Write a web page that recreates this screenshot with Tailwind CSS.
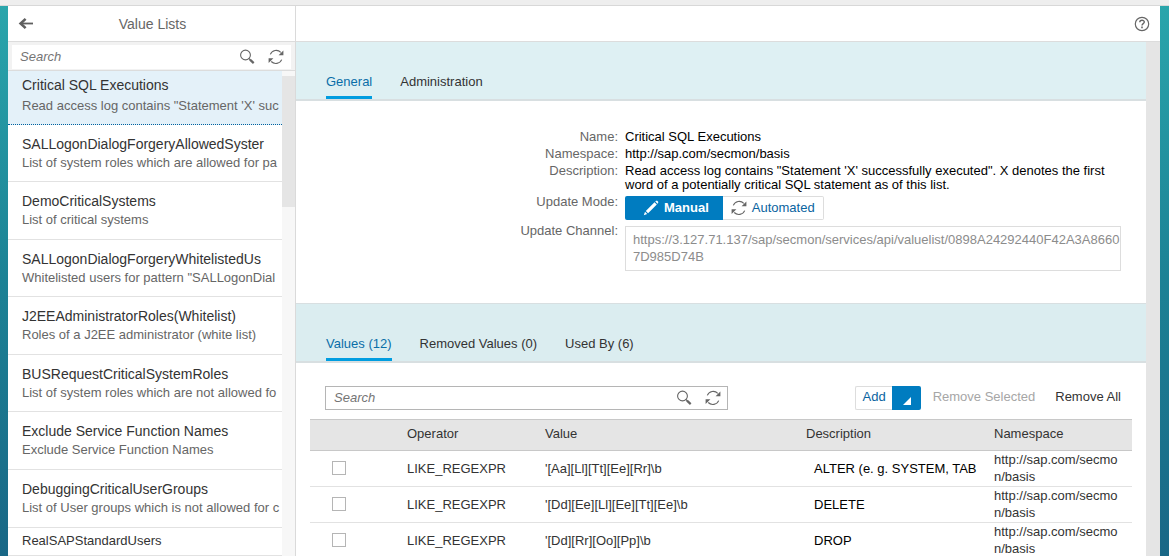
<!DOCTYPE html>
<html lang="en">
<head>
<meta charset="utf-8">
<title>Value Lists</title>
<script src="https://cdn.jsdelivr.net/npm/@tailwindcss/browser@4"></script>
</head>
<body class="flex h-screen flex-col overflow-hidden bg-linear-to-b from-[#2aa6ac] via-[#1c8295] to-[#196786] font-['Liberation_Sans',Arial,sans-serif] text-[13px] leading-[17px] text-[#333]">
<svg class="hidden" aria-hidden="true">
  <symbol id="search" viewBox="0 0 16 16">
    <circle cx="6.5" cy="6" r="4.9" fill="none" stroke="#666" stroke-width="1.1"/>
    <path d="M9.8 9.4 11.4 11" stroke="#666" stroke-width="1.2" fill="none"/>
    <path d="M11 10.6 14.7 14.1" stroke="#666" stroke-width="2.2" fill="none"/>
  </symbol>
  <symbol id="refresh" viewBox="0 0 16 16">
    <path d="M2.3 5.4A6.4 6.4 0 0 1 12.8 3.3M13.7 10.6A6.4 6.4 0 0 1 3.2 12.5" stroke="#666" stroke-width="1.1" fill="none"/>
    <path d="M15.4 1.4v4.8h-4.8zM.6 9.2h4.8L.6 14z" fill="#666"/>
  </symbol>
</svg>

<div class="h-1.5 shrink-0 border-b border-[#d8d8d8] bg-[#eee]"></div>

<div class="mr-[9px] ml-2 flex min-h-0 flex-1 bg-white">
  <aside class="flex w-72 shrink-0 flex-col border-r border-[#dadada]">
    <header class="flex h-9 shrink-0 items-center border-b border-[#dcdcdc] pl-2.5">
      <button type="button" aria-label="Back" class="size-4">
        <svg viewBox="0 0 16 16" class="size-4"><path d="M15 7.5H3" fill="none" stroke="#5f5f5f" stroke-width="1.8"/><path d="M7.6 2.9 2.6 7.5l5 4.6" fill="none" stroke="#5f5f5f" stroke-width="2.6"/></svg>
      </button>
      <h1 class="flex-1 pr-6 text-center text-sm leading-9 text-[#666]">Value Lists</h1>
    </header>
    <div class="h-[29px] shrink-0 border-b border-[#dcdcdc] bg-[#f2f2f2] px-1 pt-[3px]">
      <div class="flex h-6 items-center bg-white pr-[7px]">
        <input type="text" aria-label="Search value lists" placeholder="Search" class="min-w-0 flex-1 px-2 pb-0.5 outline-none placeholder:text-[#757575] placeholder:italic">
        <button type="button" aria-label="Search" class="mr-[13px] size-4"><svg class="size-4"><use href="#search"/></svg></button>
        <button type="button" aria-label="Refresh" class="size-4"><svg class="size-4"><use href="#refresh"/></svg></button>
      </div>
    </div>
    <div class="flex min-h-0 flex-1">
      <ul class="min-w-0 flex-1 overflow-hidden whitespace-nowrap [&_p]:text-[#666] [&_h2]:text-sm [&_h2]:leading-5">
        <li class="h-[54px] border-b border-dotted border-[#00629f] bg-[#e4f1f9] pt-1 pl-3.5"><h2>Critical SQL Executions</h2><p class="pt-0.5">Read access log contains "Statement 'X' suc</p></li>
        <li class="h-[57px] border-b border-[#e2e2e2] pt-[9px] pl-3.5"><h2>SALLogonDialogForgeryAllowedSyster</h2><p>List of system roles which are allowed for pa</p></li>
        <li class="h-[58px] border-b border-[#e2e2e2] pt-[9px] pl-3.5"><h2>DemoCriticalSystems</h2><p>List of critical systems</p></li>
        <li class="h-[57px] border-b border-[#e2e2e2] pt-[9px] pl-3.5"><h2>SALLogonDialogForgeryWhitelistedUs</h2><p>Whitelisted users for pattern "SALLogonDial</p></li>
        <li class="h-[58px] border-b border-[#e2e2e2] pt-[9px] pl-3.5"><h2>J2EEAdministratorRoles(Whitelist)</h2><p>Roles of a J2EE administrator (white list)</p></li>
        <li class="h-[57px] border-b border-[#e2e2e2] pt-[9px] pl-3.5"><h2>BUSRequestCriticalSystemRoles</h2><p>List of system roles which are not allowed fo</p></li>
        <li class="h-[58px] border-b border-[#e2e2e2] pt-[9px] pl-3.5"><h2>Exclude Service Function Names</h2><p>Exclude Service Function Names</p></li>
        <li class="h-[58px] border-b border-[#e2e2e2] pt-[9px] pl-3.5"><h2>DebuggingCriticalUserGroups</h2><p>List of User groups which is not allowed for c</p></li>
        <li class="h-7 border-b border-[#e2e2e2] pt-1 pl-3.5">RealSAPStandardUsers</li>
      </ul>
      <div class="w-[13px] bg-[#f7f7f7] pt-[5px]"><div class="h-[131px] bg-[#e5e5e5]"></div></div>
    </div>
  </aside>

  <main class="flex min-w-0 flex-1 flex-col">
    <header class="flex h-9 shrink-0 items-center justify-end border-b border-[#dcdcdc] pr-2.5">
      <button type="button" aria-label="Help" class="size-4">
        <svg viewBox="0 0 16 16" class="size-4"><circle cx="8" cy="8" r="6.7" fill="none" stroke="#666" stroke-width="1.2"/><path d="M5.8 6.3C5.8 3.6 10.3 3.6 10.3 6.1 10.3 7.7 8 7.7 8 9.5" fill="none" stroke="#666" stroke-width="1.4"/><path d="M7.2 10.6h1.6v1.6H7.2z" fill="#666"/></svg>
      </button>
    </header>
    <div class="flex min-h-0 flex-1">
      <div class="min-w-0 flex-1 overflow-hidden">
        <nav class="flex h-[59px] items-end gap-7 border-b-2 border-[#d8dfe1] bg-[#def0f3] pl-[30px]">
          <button type="button" class="h-[26px] border-b-3 border-[#009de0] pb-1.5 text-[#0a6ea8]">General</button>
          <button type="button" class="h-[26px] border-b-3 border-transparent pb-1.5">Administration</button>
        </nav>

        <section class="grid grid-cols-[322px_1fr] gap-x-[7px] pt-[27px] pr-[25px] pb-8">
          <div class="text-right text-[#666]">Name:</div><div class="text-black">Critical SQL Executions</div>
          <div class="text-right text-[#666]">Namespace:</div><div class="text-black">http://sap.com/secmon/basis</div>
          <div class="text-right text-[#666]">Description:</div>
          <div class="pt-0.5 text-black leading-[14px]">Read access log contains "Statement 'X' successfully executed". X denotes the first word of a potentially critical SQL statement as of this list.</div>
          <div class="pt-px text-right text-[#666]">Update Mode:</div>
          <div class="flex h-[30px] items-start pt-1">
            <button type="button" class="flex h-6 items-start gap-[5px] rounded-l-xs bg-[#007cc0] pt-[3px] pr-[14px] pl-[18px] font-bold text-white">
              <svg viewBox="0 0 16 16" class="mt-px size-4"><path d="M.8 15.2 2 11.8l2.2 2.2zM2.8 10.9 11.5 2.2l2.3 2.3L5.1 13.2zM12.3 1.5 13 .8h1.2l1 1V3l-.7.8z" fill="#fff"/></svg>Manual</button>
            <button type="button" class="flex h-6 items-start gap-[5px] rounded-r-xs border border-l-0 border-[#ddd] pt-0.5 pr-2 pl-2 text-[#0a64a0]">
              <svg class="mt-px size-4"><use href="#refresh"/></svg>Automated</button>
          </div>
          <label for="channel" class="text-right text-[#666]">Update Channel:</label>
          <textarea id="channel" readonly class="mt-1 h-[45px] w-full resize-none overflow-hidden border border-[#ddd] pt-1 pl-[7px] text-[#8c8c8c] outline-none">https://3.127.71.137/sap/secmon/services/api/valuelist/0898A24292440F42A3A86607D985D74B</textarea>
        </section>

        <nav class="flex h-[60px] items-end gap-7 border-t border-b-2 border-[#d8dfe1] bg-[#dbedf0] pl-[30px]">
          <button type="button" class="h-[26px] border-b-3 border-[#009de0] pb-1.5 text-[#0a6ea8]">Values (12)</button>
          <button type="button" class="h-[26px] border-b-3 border-transparent pb-1.5">Removed Values (0)</button>
          <button type="button" class="h-[26px] border-b-3 border-transparent pb-1.5">Used By (6)</button>
        </nav>

        <section class="pt-[23px] pr-3.5 pl-3.5">
          <div class="mb-[9px] flex items-start pr-[11px] pl-[15px]">
            <div class="flex h-6 w-[403px] items-center border border-[#b5b5b5] pr-1.5">
              <input type="text" aria-label="Search values" placeholder="Search" class="min-w-0 flex-1 px-2 pb-0.5 outline-none placeholder:text-[#757575] placeholder:italic">
              <button type="button" aria-label="Search" class="mr-[13px] size-4"><svg class="size-4"><use href="#search"/></svg></button>
              <button type="button" aria-label="Refresh" class="size-4"><svg class="size-4"><use href="#refresh"/></svg></button>
            </div>
            <div class="ml-auto flex h-6">
              <button type="button" class="flex rounded-l-xs border border-r-0 border-[#ddd] px-1.5 pt-px text-[#0a64a0]">Add</button>
              <button type="button" aria-label="More add options" class="flex w-[29px] items-end justify-end rounded-r-xs bg-[#007cc0] pr-2.5 pb-[5px]"><svg viewBox="0 0 8 8" class="size-2"><path d="M8 0v8H0z" fill="#fff"/></svg></button>
              <button type="button" disabled class="ml-3 flex pt-0.5 text-[#a6a6a6]">Remove Selected</button>
              <button type="button" class="ml-5 flex pt-0.5">Remove All</button>
            </div>
          </div>
          <table class="w-full table-fixed border-collapse text-left">
            <colgroup><col class="w-[97px]"><col class="w-[138px]"><col class="w-[261px]"><col class="w-[188px]"><col></colgroup>
            <thead>
              <tr class="h-[31px] border-y border-[#c8c8c8] bg-[#e5e5e5] [&>th]:p-0 [&>th]:pb-1 [&>th]:font-normal">
                <th aria-label="Select"></th><th>Operator</th><th>Value</th><th>Description</th><th>Namespace</th>
              </tr>
            </thead>
            <tbody class="[&_td]:p-0 [&_td]:pb-px [&_tr]:h-9 [&_tr]:border-b [&_tr]:border-[#e2e2e2]">
              <tr>
                <td><input type="checkbox" aria-label="Select ALTER" class="ml-[22px] block size-3.5 appearance-none border border-[#b5b5b5] bg-white"></td>
                <td>LIKE_REGEXPR</td><td>'[Aa][Ll][Tt][Ee][Rr]\b</td>
                <td><div class="ml-2 whitespace-nowrap text-black">ALTER (e. g. SYSTEM, TAB</div></td>
                <td><div class="pr-2 break-all">http://sap.com/secmon/basis</div></td>
              </tr>
              <tr>
                <td><input type="checkbox" aria-label="Select DELETE" class="ml-[22px] block size-3.5 appearance-none border border-[#b5b5b5] bg-white"></td>
                <td>LIKE_REGEXPR</td><td>'[Dd][Ee][Ll][Ee][Tt][Ee]\b</td>
                <td><div class="ml-2 whitespace-nowrap text-black">DELETE</div></td>
                <td><div class="pr-2 break-all">http://sap.com/secmon/basis</div></td>
              </tr>
              <tr>
                <td><input type="checkbox" aria-label="Select DROP" class="ml-[22px] block size-3.5 appearance-none border border-[#b5b5b5] bg-white"></td>
                <td>LIKE_REGEXPR</td><td>'[Dd][Rr][Oo][Pp]\b</td>
                <td><div class="ml-2 whitespace-nowrap text-black">DROP</div></td>
                <td><div class="pr-2 break-all">http://sap.com/secmon/basis</div></td>
              </tr>
            </tbody>
          </table>
        </section>
      </div>
      <div class="w-3.5 bg-[#e5e5e5]"></div>
    </div>
  </main>
</div>
</body>
</html>
